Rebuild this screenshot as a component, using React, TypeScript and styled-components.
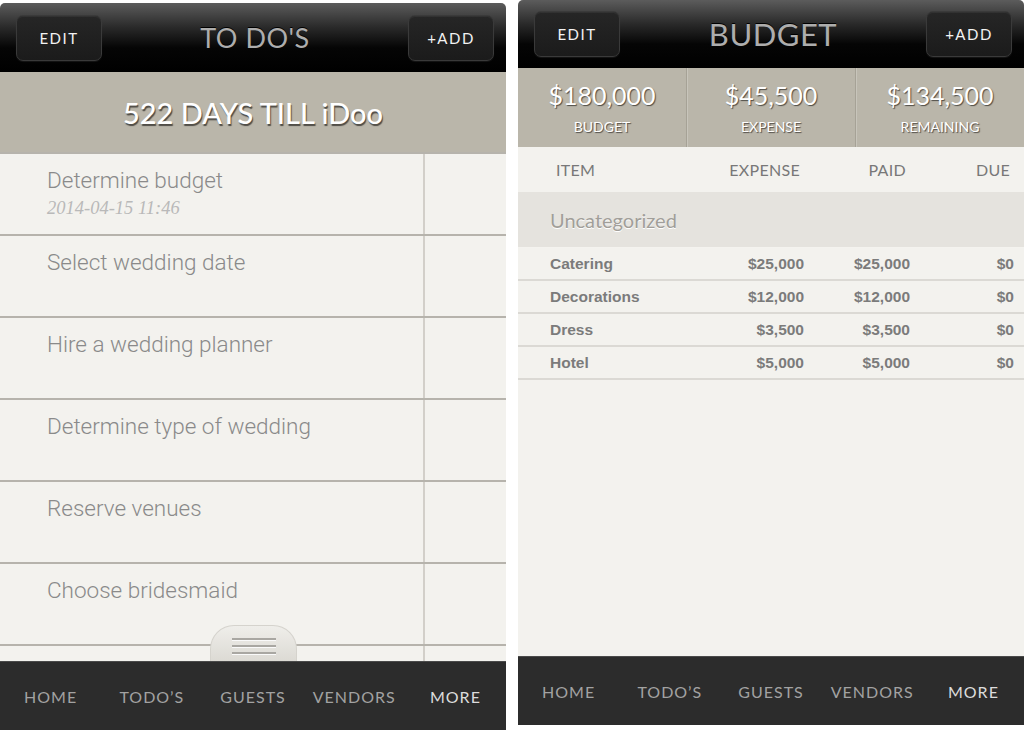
import * as React from 'react';
import styled, { createGlobalStyle } from 'styled-components';

const GlobalStyle = createGlobalStyle`
  html, body {
    margin: 0;
    padding: 0;
    background: #ffffff;
  }
  body {
    font-family: 'Lato', 'DejaVu Sans', sans-serif;
  }
`;

const Page = styled.div`
  display: flex;
  align-items: flex-start;
  gap: 12px;
  width: 1024px;
  height: 733px;
  overflow: hidden;
`;

const Phone = styled.div<{ $offset: number; $height: number }>`
  width: 506px;
  height: ${({ $height }) => $height}px;
  margin-top: ${({ $offset }) => $offset}px;
  display: flex;
  flex-direction: column;
  background: #f3f2ee;
  border-radius: 5px 5px 0 0;
  overflow: hidden;
`;

const NavBar = styled.div<{ $height: number }>`
  height: ${({ $height }) => $height}px;
  flex: none;
  display: flex;
  align-items: center;
  justify-content: space-between;
  padding: 0 12px 0 16px;
  background: linear-gradient(#5c5c5c 0%, #2a2a2a 35%, #050505 65%, #000 100%);
`;

const NavButton = styled.div`
  width: 84px;
  height: 44px;
  display: flex;
  align-items: center;
  justify-content: center;
  border-radius: 7px;
  background: linear-gradient(#262626, #1b1b1b);
  border: 1px solid #3a3a3a;
  box-shadow: inset 0 1px 0 rgba(255, 255, 255, 0.06), 0 1px 1px rgba(255, 255, 255, 0.08);
  color: #f2f2f2;
  font-size: 15px;
  letter-spacing: 1.5px;
`;

const NavTitle = styled.div<{ $size: number }>`
  color: #adadad;
  font-size: ${({ $size }) => $size}px;
  letter-spacing: 0.5px;
  text-shadow: 0 -1px 0 #000;
`;

const Banner = styled.div`
  height: 80px;
  flex: none;
  display: flex;
  align-items: center;
  justify-content: center;
  background: #bab6aa;
  color: #ffffff;
  font-size: 29px;
  font-weight: 500;
  text-shadow: 1px 2px 1px #4f4c46;
`;

const TodoList = styled.div`
  position: relative;
  flex: 1;
  overflow: hidden;
  border-top: 2px solid #b6b3ac;
`;

const TodoRow = styled.div`
  height: 80px;
  display: flex;
  border-bottom: 2px solid #b6b3ac;
`;

const TodoMain = styled.div`
  width: 425px;
  flex: none;
  padding: 14px 0 0 47px;
  box-sizing: border-box;
  border-right: 2px solid #d2cfc9;
`;

const TodoTitle = styled.div`
  font-family: 'Roboto', 'Liberation Sans', sans-serif;
  font-weight: 300;
  font-size: 22.5px;
  line-height: 25px;
  color: #8a8a8a;
`;

const TodoDate = styled.div`
  font-family: 'Liberation Serif', serif;
  font-style: italic;
  font-size: 18.5px;
  line-height: 22px;
  margin-top: 4px;
  color: #b9b9b9;
`;

const Handle = styled.div`
  position: absolute;
  left: 210px;
  bottom: 0;
  width: 87px;
  height: 36px;
  box-sizing: border-box;
  border: 1px solid #d5d3cd;
  border-bottom: none;
  border-radius: 24px 24px 0 0;
  background: linear-gradient(#efeeea, #dcdad4);
  display: flex;
  flex-direction: column;
  align-items: center;
  gap: 5px;
  padding-top: 12px;
`;

const HandleLine = styled.div`
  width: 44px;
  height: 2px;
  background: #a9a7a2;
  box-shadow: 0 1px 0 #fafafa;
`;

const TabBar = styled.div`
  height: 69px;
  flex: none;
  display: flex;
  align-items: center;
  background: #2c2c2c;
  border-top: 1px solid #4a4a4a;
  box-sizing: border-box;
`;

const Tab = styled.div<{ $active?: boolean }>`
  flex: 1;
  text-align: center;
  font-size: 16px;
  letter-spacing: 1px;
  color: ${({ $active }) => ($active ? '#dcdcdc' : '#a2a2a2')};
`;

const Stats = styled.div`
  height: 79px;
  flex: none;
  display: flex;
  background: #bab6aa;
`;

const Stat = styled.div`
  flex: 1;
  display: flex;
  flex-direction: column;
  align-items: center;
  padding-top: 12px;
  box-sizing: border-box;
  color: #ffffff;
  text-shadow: 1px 1px 1px #4f4c46;
  & + & {
    border-left: 1px solid #a6a296;
    box-shadow: inset 1px 0 0 #c8c5bb;
  }
`;

const StatValue = styled.div`
  font-size: 25px;
  line-height: 30px;
`;

const StatLabel = styled.div`
  font-size: 14px;
  line-height: 18px;
  margin-top: 8px;
`;

const BudgetGrid = styled.div`
  display: grid;
  grid-template-columns: 1fr 110px 106px 104px;
  align-items: center;
  padding: 0 10px 0 32px;
`;

const HeaderRow = styled(BudgetGrid)`
  height: 45px;
  color: #787878;
  font-size: 16px;
  letter-spacing: 0.3px;
`;

const HeaderCell = styled.div<{ $first?: boolean }>`
  text-align: ${({ $first }) => ($first ? 'left' : 'right')};
  padding: ${({ $first }) => ($first ? '0 0 0 6px' : '0 4px 0 0')};
`;

const Category = styled.div`
  height: 55px;
  display: flex;
  align-items: center;
  padding-left: 32px;
  background: #e5e3de;
  color: #a19e99;
  font-size: 20px;
  text-shadow: 0 1px 0 #ffffff;
  border-bottom: 1px solid #f4f3ef;
`;

const ItemRow = styled(BudgetGrid)`
  height: 31px;
  border-bottom: 2px solid #dbd9d4;
  font-family: 'Liberation Sans', Arial, sans-serif;
  font-weight: 700;
  font-size: 15.5px;
  color: #7b7b7b;
`;

const ItemCell = styled.div<{ $first?: boolean }>`
  text-align: ${({ $first }) => ($first ? 'left' : 'right')};
`;

const Spacer = styled.div`
  flex: 1;
`;

const todos = [
  { title: 'Determine budget', date: '2014-04-15 11:46' },
  { title: 'Select wedding date' },
  { title: 'Hire a wedding planner' },
  { title: 'Determine type of wedding' },
  { title: 'Reserve venues' },
  { title: 'Choose bridesmaid' },
  { title: '' },
];

const items = [
  ['Catering', '$25,000', '$25,000', '$0'],
  ['Decorations', '$12,000', '$12,000', '$0'],
  ['Dress', '$3,500', '$3,500', '$0'],
  ['Hotel', '$5,000', '$5,000', '$0'],
];

const tabs = ['HOME', 'TODO\u2019S', 'GUESTS', 'VENDORS', 'MORE'];

function Tabs() {
  return (
    <TabBar>
      {tabs.map((t) => <Tab key={t} $active={t === 'MORE'}>{t}</Tab>)}
    </TabBar>
  );
}

export default function App() {
  return (
    <Page>
      <GlobalStyle />
      <Phone $offset={3} $height={727}>
        <NavBar $height={69}>
          <NavButton>EDIT</NavButton>
          <NavTitle $size={27}>TO DO'S</NavTitle>
          <NavButton>+ADD</NavButton>
        </NavBar>
        <Banner>522 DAYS TILL iDoo</Banner>
        <TodoList>
          {todos.map((todo, i) => (
            <TodoRow key={i}>
              <TodoMain>
                <TodoTitle>{todo.title}</TodoTitle>
                {todo.date && <TodoDate>{todo.date}</TodoDate>}
              </TodoMain>
            </TodoRow>
          ))}
          <Handle>
            <HandleLine />
            <HandleLine />
            <HandleLine />
          </Handle>
        </TodoList>
        <Tabs />
      </Phone>
      <Phone $offset={0} $height={725}>
        <NavBar $height={68}>
          <NavButton>EDIT</NavButton>
          <NavTitle $size={31}>BUDGET</NavTitle>
          <NavButton>+ADD</NavButton>
        </NavBar>
        <Stats>
          <Stat><StatValue>$180,000</StatValue><StatLabel>BUDGET</StatLabel></Stat>
          <Stat><StatValue>$45,500</StatValue><StatLabel>EXPENSE</StatLabel></Stat>
          <Stat><StatValue>$134,500</StatValue><StatLabel>REMAINING</StatLabel></Stat>
        </Stats>
        <HeaderRow>
          <HeaderCell $first>ITEM</HeaderCell>
          <HeaderCell>EXPENSE</HeaderCell>
          <HeaderCell>PAID</HeaderCell>
          <HeaderCell>DUE</HeaderCell>
        </HeaderRow>
        <Category>Uncategorized</Category>
        {items.map((row) => (
          <ItemRow key={row[0]}>
            {row.map((cell, j) => <ItemCell key={j} $first={j === 0}>{cell}</ItemCell>)}
          </ItemRow>
        ))}
        <Spacer />
        <Tabs />
      </Phone>
    </Page>
  );
}
